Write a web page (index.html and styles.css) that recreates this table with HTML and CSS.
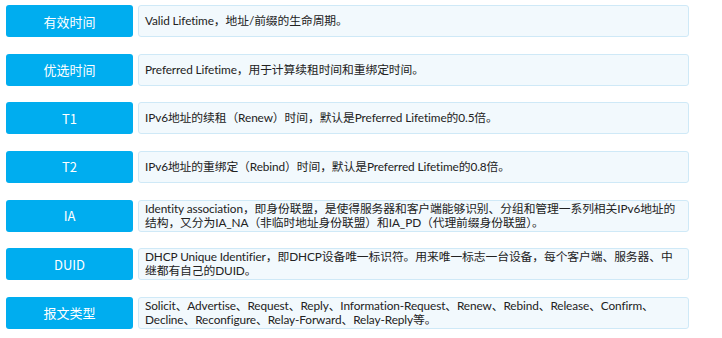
FILE: index.html
```html
<!DOCTYPE html>
<html lang="zh">
<head>
<meta charset="utf-8">
<link rel="stylesheet" href="styles.css">
</head>
<body>
<div class="list">
  <div class="row"><div class="label">有效时间</div><div class="desc">Valid Lifetime，地址/前缀的生命周期。</div></div>
  <div class="row"><div class="label">优选时间</div><div class="desc">Preferred Lifetime，用于计算续租时间和重绑定时间。</div></div>
  <div class="row"><div class="label">T1</div><div class="desc">IPv6地址的续租（Renew）时间，默认是Preferred Lifetime的0.5倍。</div></div>
  <div class="row"><div class="label">T2</div><div class="desc">IPv6地址的重绑定（Rebind）时间，默认是Preferred Lifetime的0.8倍。</div></div>
  <div class="row"><div class="label">IA</div><div class="desc">Identity association，即身份联盟，是使得服务器和客户端能够识别、分组和管理一系列相关IPv6地址的结构，又分为IA_NA（非临时地址身份联盟）和IA_PD（代理前缀身份联盟）。</div></div>
  <div class="row"><div class="label">DUID</div><div class="desc">DHCP Unique Identifier，即DHCP设备唯一标识符。用来唯一标志一台设备，每个客户端、服务器、中继都有自己的DUID。</div></div>
  <div class="row"><div class="label">报文类型</div><div class="desc">Solicit、Advertise、Request、Reply、Information-Request、Renew、Rebind、Release、Confirm、Decline、Reconfigure、Relay-Forward、Relay-Reply等。</div></div>
</div>
</body>
</html>
```
FILE: styles.css
```css
html, body {
  margin: 0;
  padding: 0;
  background: #ffffff;
}
body {
  font-family: "Noto Sans CJK SC", sans-serif;
}
.list {
  display: flex;
  flex-direction: column;
  gap: 16.67px;
  padding: 5px 0 0 6px;
  width: 683px;
}
.row {
  display: flex;
  gap: 5px;
  height: 32px;
}
.label {
  flex: 0 0 127px;
  background: #00adef;
  border-radius: 3px;
  color: #ffffff;
  font-size: 13px;
  display: flex;
  align-items: center;
  justify-content: center;
}
.desc {
  flex: 1;
  box-sizing: border-box;
  background: #f2f9fd;
  border: 1px solid #cfe9f7;
  border-radius: 3px;
  color: #222222;
  font-family: Lato, "Noto Sans CJK SC", sans-serif;
  font-size: 11.8px;
  letter-spacing: -0.1px;
  line-height: 14px;
  padding: 0 5px 0 6px;
  display: flex;
  align-items: center;
}
```
